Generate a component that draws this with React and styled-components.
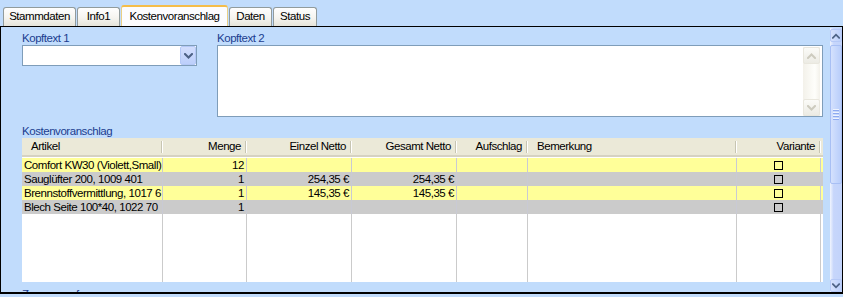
import React from "react";
import styled, { createGlobalStyle, css } from "styled-components";

const GlobalStyle = createGlobalStyle`
  html, body { margin: 0; padding: 0; background: #c1dcfc; overflow: hidden; }
  body { font-family: "Liberation Sans", Arial, sans-serif; font-size: 11.5px; letter-spacing: -0.45px; color: #000; }
  * { box-sizing: border-box; }
`;

const Page = styled.div`
  width: 843px;
  height: 297px;
  background: #c1dcfc;
  display: flex;
  flex-direction: column;
`;

const TabStrip = styled.div`
  height: 26px;
  flex-shrink: 0;
  display: flex;
  align-items: flex-end;
  gap: 1px;
  padding-left: 3px;
`;

const Tab = styled.div`
  width: ${(p) => p.$w}px;
  height: 19px;
  border: 1px solid #919b9c;
  border-bottom: none;
  border-radius: 3px 3px 0 0;
  background: linear-gradient(#fefefe, #f5f4ef 55%, #e6e4da);
  text-align: center;
  line-height: 13px;
  padding-top: 2px;
  white-space: nowrap;
  ${(p) =>
    p.$active &&
    css`
      height: 21px;
      padding-top: 3px;
      border-color: #e9cf84;
      border-top: 2px solid #f4bd4a;
      background: #fcfcfe;
    `}
`;

const Panel = styled.div`
  height: 268px;
  flex-shrink: 0;
  border: 1px solid #000;
  border-bottom-width: 2px;
  display: flex;
  background: #c1dcfc;
`;

const Content = styled.div`
  flex: 1;
  min-width: 0;
  padding: 5px 7px 0 21px;
  overflow: hidden;
  display: flex;
  flex-direction: column;
  & > * { flex-shrink: 0; }
`;

const TopRow = styled.div`
  display: flex;
  gap: 20px;
`;

const Field = styled.div`
  display: flex;
  flex-direction: column;
  width: ${(p) => (p.$w ? `${p.$w}px` : "auto")};
  flex: ${(p) => (p.$w ? "none" : "1")};
`;

const Label = styled.div`
  color: #1b3d8f;
  line-height: 13px;
  height: 13px;
  white-space: nowrap;
  margin-top: ${(p) => p.$mt || 0}px;
`;

const Combo = styled.div`
  height: 21px;
  border: 1px solid #7f9db9;
  background: #fff;
  display: flex;
  justify-content: flex-end;
`;

const ComboButton = styled.div`
  width: 16px;
  height: 19px;
  border: 1px solid #b4c8f6;
  border-radius: 2px;
  background: linear-gradient(#d3defd, #bccffb);
  display: flex;
  align-items: center;
  justify-content: center;
`;

const Memo = styled.div`
  height: 72px;
  border: 1px solid #7f9db9;
  background: #fff;
  display: flex;
  justify-content: flex-end;
  padding: 1px 2px 0 0;
`;

const MemoScroll = styled.div`
  width: 17px;
  display: flex;
  flex-direction: column;
  justify-content: space-between;
  background: linear-gradient(to right, #f3f1ea, #fefefb 70%, #f3f1ea);
`;

const MemoButton = styled.div`
  width: 17px;
  height: 17px;
  border: 1px solid #e9e7de;
  border-radius: 2px;
  background: linear-gradient(#fbfbf8, #ecebe4);
  display: flex;
  align-items: center;
  justify-content: center;
`;

const COLS = "141px 84px 105px 105px 71px 209px 84px 1fr";

const Grid = styled.div`
  width: 801px;
  height: 144px;
  background: #fff;
  display: flex;
  flex-direction: column;
  overflow: hidden;
  & > * { flex-shrink: 0; }
`;

const HeaderRow = styled.div`
  display: grid;
  grid-template-columns: ${COLS};
  height: 19px;
  background: #ebe9d8;
  border-bottom: 2px solid #d6d2c2;
  margin-bottom: 1px;
`;

const HeaderCell = styled.div`
  line-height: 17px;
  white-space: nowrap;
  overflow: hidden;
  text-align: ${(p) => (p.$right ? "right" : "left")};
  padding: ${(p) => (p.$right ? "0 6px 0 0" : "0 0 0 9px")};
  background: ${(p) =>
    p.$noDivider
      ? "none"
      : `linear-gradient(#c7c5b2, #c7c5b2) no-repeat calc(100% - 1px) 3px / 1px 12px,
         linear-gradient(#fff, #fff) no-repeat 100% 3px / 1px 12px`};
`;

const DataRow = styled.div`
  display: grid;
  grid-template-columns: ${COLS};
  height: 14px;
  background: ${(p) => (p.$alt ? "#cbcbcb" : "#ffff99")};
`;

const Cell = styled.div`
  line-height: 14px;
  white-space: nowrap;
  overflow: hidden;
  padding: 0 2px;
  text-align: ${(p) => (p.$right ? "right" : "left")};
  border-right: ${(p) => (p.$last ? "none" : "1px solid #c9cad4")};
  display: ${(p) => (p.$center ? "flex" : "block")};
  align-items: center;
  justify-content: center;
`;

const Filler = styled.div`
  flex: 1 1 auto !important;
  display: grid;
  grid-template-columns: ${COLS};
`;

const FillerCell = styled.div`
  border-right: ${(p) => (p.$last ? "none" : "1px solid #cbcbcb")};
`;

const Check = styled.span`
  width: 9px;
  height: 9px;
  border: 1px solid #000;
  display: inline-block;
`;

const VScroll = styled.div`
  width: 12px;
  margin-top: 1px;
  display: flex;
  flex-direction: column;
  background: linear-gradient(to right, #f1f5fe, #c7d6fb 30%, #c2d3fb);
  padding-top: 1px;
`;

const ScrollButton = styled.div`
  height: 13px;
  flex-shrink: 0;
  border: 1px solid #b6c9f7;
  border-radius: 2px;
  background: linear-gradient(to right, #d6e1fd, #bccffb);
  display: flex;
  align-items: center;
  justify-content: center;
  margin-top: ${(p) => (p.$bottom ? "auto" : "0")};
`;

const Thumb = styled.div`
  height: 139px;
  flex-shrink: 0;
  margin-top: 3px;
  border: 1px solid #a8bff4;
  border-radius: 2px;
  background: linear-gradient(to right, #d5e1fd, #c3d5fc 60%, #b9cdfa);
  display: flex;
  flex-direction: column;
  align-items: center;
  justify-content: center;
  gap: 1px;
`;

const Grip = styled.div`
  width: 6px;
  height: 1px;
  background: #eef3fe;
  box-shadow: 0 1px 0 #8eaaf0;
  margin-bottom: 1px;
`;

const Chevron = ({ dir = "down", color = "#4d6185", w = 9, h = 6, sw = 2 }) => (
  <svg width={w} height={h} viewBox="0 0 9 6">
    <polyline
      points={dir === "down" ? "1,1 4.5,4.5 8,1" : "1,5 4.5,1.5 8,5"}
      fill="none"
      stroke={color}
      strokeWidth={sw}
      strokeLinecap="square"
    />
  </svg>
);

const rows = [
  { artikel: "Comfort KW30 (Violett,Small),", menge: "12", einzel: "", gesamt: "" },
  { artikel: "Sauglüfter 200, 1009 401", menge: "1", einzel: "254,35 €", gesamt: "254,35 €" },
  { artikel: "Brennstoffvermittlung, 1017 6", menge: "1", einzel: "145,35 €", gesamt: "145,35 €" },
  { artikel: "Blech Seite 100*40, 1022 70", menge: "1", einzel: "", gesamt: "" },
];

export default function App() {
  return (
    <Page>
      <GlobalStyle />
      <TabStrip>
        <Tab $w={73}>Stammdaten</Tab>
        <Tab $w={43}>Info1</Tab>
        <Tab $w={107} $active>Kostenvoranschlag</Tab>
        <Tab $w={43}>Daten</Tab>
        <Tab $w={44}>Status</Tab>
      </TabStrip>
      <Panel>
        <Content>
          <TopRow>
            <Field $w={175}>
              <Label>Kopftext 1</Label>
              <Combo>
                <ComboButton>
                  <Chevron dir="down" />
                </ComboButton>
              </Combo>
            </Field>
            <Field>
              <Label>Kopftext 2</Label>
              <Memo>
                <MemoScroll>
                  <MemoButton>
                    <Chevron dir="up" color="#cdcbbf" />
                  </MemoButton>
                  <MemoButton>
                    <Chevron dir="down" color="#cdcbbf" />
                  </MemoButton>
                </MemoScroll>
              </Memo>
            </Field>
          </TopRow>
          <Label $mt={8}>Kostenvoranschlag</Label>
          <Grid>
            <HeaderRow>
              <HeaderCell>Artikel</HeaderCell>
              <HeaderCell $right>Menge</HeaderCell>
              <HeaderCell $right>Einzel Netto</HeaderCell>
              <HeaderCell $right>Gesamt Netto</HeaderCell>
              <HeaderCell $right>Aufschlag</HeaderCell>
              <HeaderCell>Bemerkung</HeaderCell>
              <HeaderCell $right>Variante</HeaderCell>
              <HeaderCell $noDivider />
            </HeaderRow>
            {rows.map((r, i) => (
              <DataRow key={i} $alt={i % 2 === 1}>
                <Cell>{r.artikel}</Cell>
                <Cell $right>{r.menge}</Cell>
                <Cell $right>{r.einzel}</Cell>
                <Cell $right>{r.gesamt}</Cell>
                <Cell />
                <Cell />
                <Cell $center>
                  <Check />
                </Cell>
                <Cell $last />
              </DataRow>
            ))}
            <Filler>
              {Array.from({ length: 8 }).map((_, i) => (
                <FillerCell key={i} $last={i === 7} />
              ))}
            </Filler>
          </Grid>
          <Label $mt={6}>Zusammenfassung</Label>
        </Content>
        <VScroll>
          <ScrollButton>
            <Chevron dir="up" w={8} h={6} />
          </ScrollButton>
          <Thumb>
            <Grip />
            <Grip />
            <Grip />
            <Grip />
          </Thumb>
          <ScrollButton $bottom>
            <Chevron dir="down" w={8} h={6} />
          </ScrollButton>
        </VScroll>
      </Panel>
    </Page>
  );
}
